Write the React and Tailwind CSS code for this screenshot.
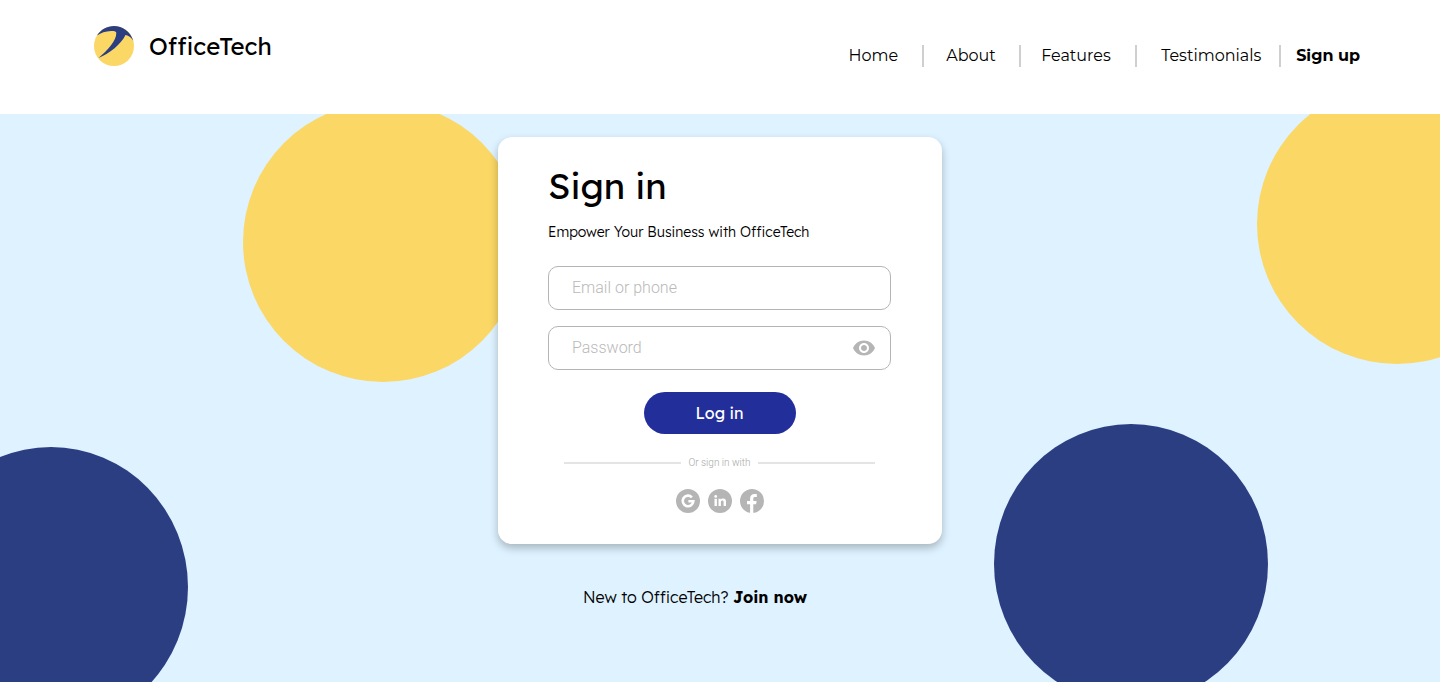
import { useState } from "react";

const DISPLAY = "font-[Lexend,Inter,sans-serif]";

function Logo() {
  return (
    <svg viewBox="0 0 40 40" className="size-10" aria-hidden="true">
      <circle cx="20" cy="20" r="20" fill="#fbd765" />
      <path
        d="M3 9.5C7 3.500 13 0 20 0c8.500 0 16.500 5.500 19.300 14.700C36.500 10.600 34 9.200 31.500 9 27 18 16 27.500 4.500 32 13.500 24.500 22.500 15 22.300 6.800 22.200 5.300 20 5 17 5 11.500 5.200 7 6.800 3 9.500Z"
        fill="#2c3e82"
      />
    </svg>
  );
}

function EyeIcon() {
  return (
    <svg viewBox="0 0 24 24" className="size-6" fill="#b5b5b5" aria-hidden="true">
      <path d="M12 4.500C7 4.500 2.730 7.610 1 12c1.730 4.390 6 7.500 11 7.500s9.270-3.110 11-7.500c-1.730-4.390-6-7.500-11-7.500zM12 17c-2.760 0-5-2.240-5-5s2.240-5 5-5 5 2.240 5 5-2.240 5-5 5zm0-8c-1.660 0-3 1.340-3 3s1.340 3 3 3 3-1.340 3-3-1.340-3-3-3z" />
    </svg>
  );
}

function GoogleIcon() {
  return (
    <svg viewBox="0 0 24 24" className="size-6" aria-hidden="true">
      <circle cx="12" cy="12" r="12" fill="#b5b5b5" />
      <path
        d="M15.900 8.300A5.300 5.300 0 1 0 17.300 12.300H12.400"
        fill="none"
        stroke="#fff"
        strokeWidth="2.600"
      />
    </svg>
  );
}

function LinkedInIcon() {
  return (
    <svg viewBox="0 0 24 24" className="size-6" aria-hidden="true">
      <circle cx="12" cy="12" r="12" fill="#b5b5b5" />
      <g fill="#fff">
        <circle cx="7.700" cy="7.400" r="1.400" />
        <path d="M6.500 9.700h2.400V17H6.500zM10.500 9.700h2.300v1c.4-.7 1.200-1.200 2.400-1.200 2.300 0 2.800 1.500 2.800 3.500v4h-2.400v-3.600c0-.9 0-1.900-1.200-1.900s-1.500.9-1.500 1.900V17h-2.400z" />
      </g>
    </svg>
  );
}

function FacebookIcon() {
  return (
    <svg viewBox="0 0 24 24" className="size-6" aria-hidden="true">
      <circle cx="12" cy="12" r="12" fill="#b5b5b5" />
      <path
        d="M10.100 24v-8.700H7v-3.400h3.100V9.400c0-3 1.700-4.500 4.300-4.500.9 0 1.800.1 2.400.2v2.900h-1.600c-1.400 0-1.900.7-1.900 1.700v2.200h3.300l-.5 3.400h-2.800V24z"
        fill="#fff"
      />
    </svg>
  );
}

const socials = [
  { label: "Sign in with Google", Icon: GoogleIcon },
  { label: "Sign in with LinkedIn", Icon: LinkedInIcon },
  { label: "Sign in with Facebook", Icon: FacebookIcon },
];

const links = [
  { label: "Home", item: "pr-6" },
  { label: "About", item: "w-[97px] border-l-2 pl-[22px]" },
  { label: "Features", item: "w-[116px] border-l-2 pl-5" },
  { label: "Testimonials", item: "w-36 border-l-2 pl-6" },
  { label: "Sign up", item: "border-l-2 pl-[15px] font-bold" },
];

const field =
  "h-11 w-full rounded-[10px] border border-[#b5b5b5] bg-white pb-0.5 pl-[23px] font-[Roboto,sans-serif] text-base font-light text-black placeholder:text-[#b9b9b9]";

export default function App() {
  const [visible, setVisible] = useState(false);

  return (
    <div className={`flex min-h-screen flex-col bg-white text-black ${DISPLAY}`}>
      <header className="flex h-[114px] items-start justify-between pr-20 pl-[94px]">
        <a href="#" className="mt-[26px] flex items-center gap-[15px] text-2xl">
          <Logo />
          OfficeTech
        </a>
        <nav className="mt-[45px]">
          <ul className="flex font-[Montserrat,Inter,sans-serif] text-base leading-[22px]">
            {links.map(({ label, item }) => (
              <li key={label} className={`border-[#cfcfcf] ${item}`}>
                <a href="#">{label}</a>
              </li>
            ))}
          </ul>
        </nav>
      </header>

      <main className="relative isolate flex grow flex-col items-center overflow-hidden bg-[#def2ff] pt-[23px]">
        <div className="absolute -top-3 left-[243px] -z-10 size-70 rounded-full bg-[#fbd765]" />
        <div className="absolute -top-[30px] -right-[97px] -z-10 size-70 rounded-full bg-[#fbd765]" />
        <div className="absolute top-[333px] -left-[86px] -z-10 h-70 w-[274px] rounded-[50%] bg-[#2c3e82]" />
        <div className="absolute top-[310px] right-[172px] -z-10 h-70 w-[274px] rounded-[50%] bg-[#2c3e82]" />

        <section className="w-full max-w-[444px] rounded-[14px] bg-white pt-6 pr-[51px] pb-[31px] pl-[50px] shadow-[0_4px_8px_rgba(0,0,0,0.25)]">
          <h1 className="text-4xl leading-[50px]">Sign in</h1>
          <p className="mt-[11px] text-sm leading-5 font-light">Empower Your Business with OfficeTech</p>

          <form className="mt-6 flex flex-col" onSubmit={(e) => e.preventDefault()}>
            <input type="text" aria-label="Email or phone" placeholder="Email or phone" className={field} />
            <div className="relative mt-4">
              <input
                type={visible ? "text" : "password"}
                aria-label="Password"
                placeholder="Password"
                className={field}
              />
              <button
                type="button"
                aria-label="Show password"
                className="absolute top-[10px] right-[15px]"
                onClick={() => setVisible(!visible)}
              >
                <EyeIcon />
              </button>
            </div>
            <button
              type="submit"
              className="mt-[22px] h-[42px] w-38 self-center rounded-full bg-[#222e9a] text-base text-white"
            >
              Log in
            </button>
          </form>

          <div className="mt-[21px] flex items-center gap-[7px] px-4 font-[Roboto,sans-serif] text-[10px] leading-4 font-light text-[#a8a8a8]">
            <span className="h-0.5 grow bg-[#e4e4e4]" />
            Or sign in with
            <span className="h-0.5 grow bg-[#e4e4e4]" />
          </div>

          <div className="mt-[18px] flex justify-center gap-2">
            {socials.map(({ label, Icon }) => (
              <button key={label} type="button" aria-label={label}>
                <Icon />
              </button>
            ))}
          </div>
        </section>

        <p className="mt-[41px] mr-[50px] text-base font-light">
          New to OfficeTech?{" "}
          <a href="#" className="font-bold">
            Join now
          </a>
        </p>
      </main>
    </div>
  );
}
